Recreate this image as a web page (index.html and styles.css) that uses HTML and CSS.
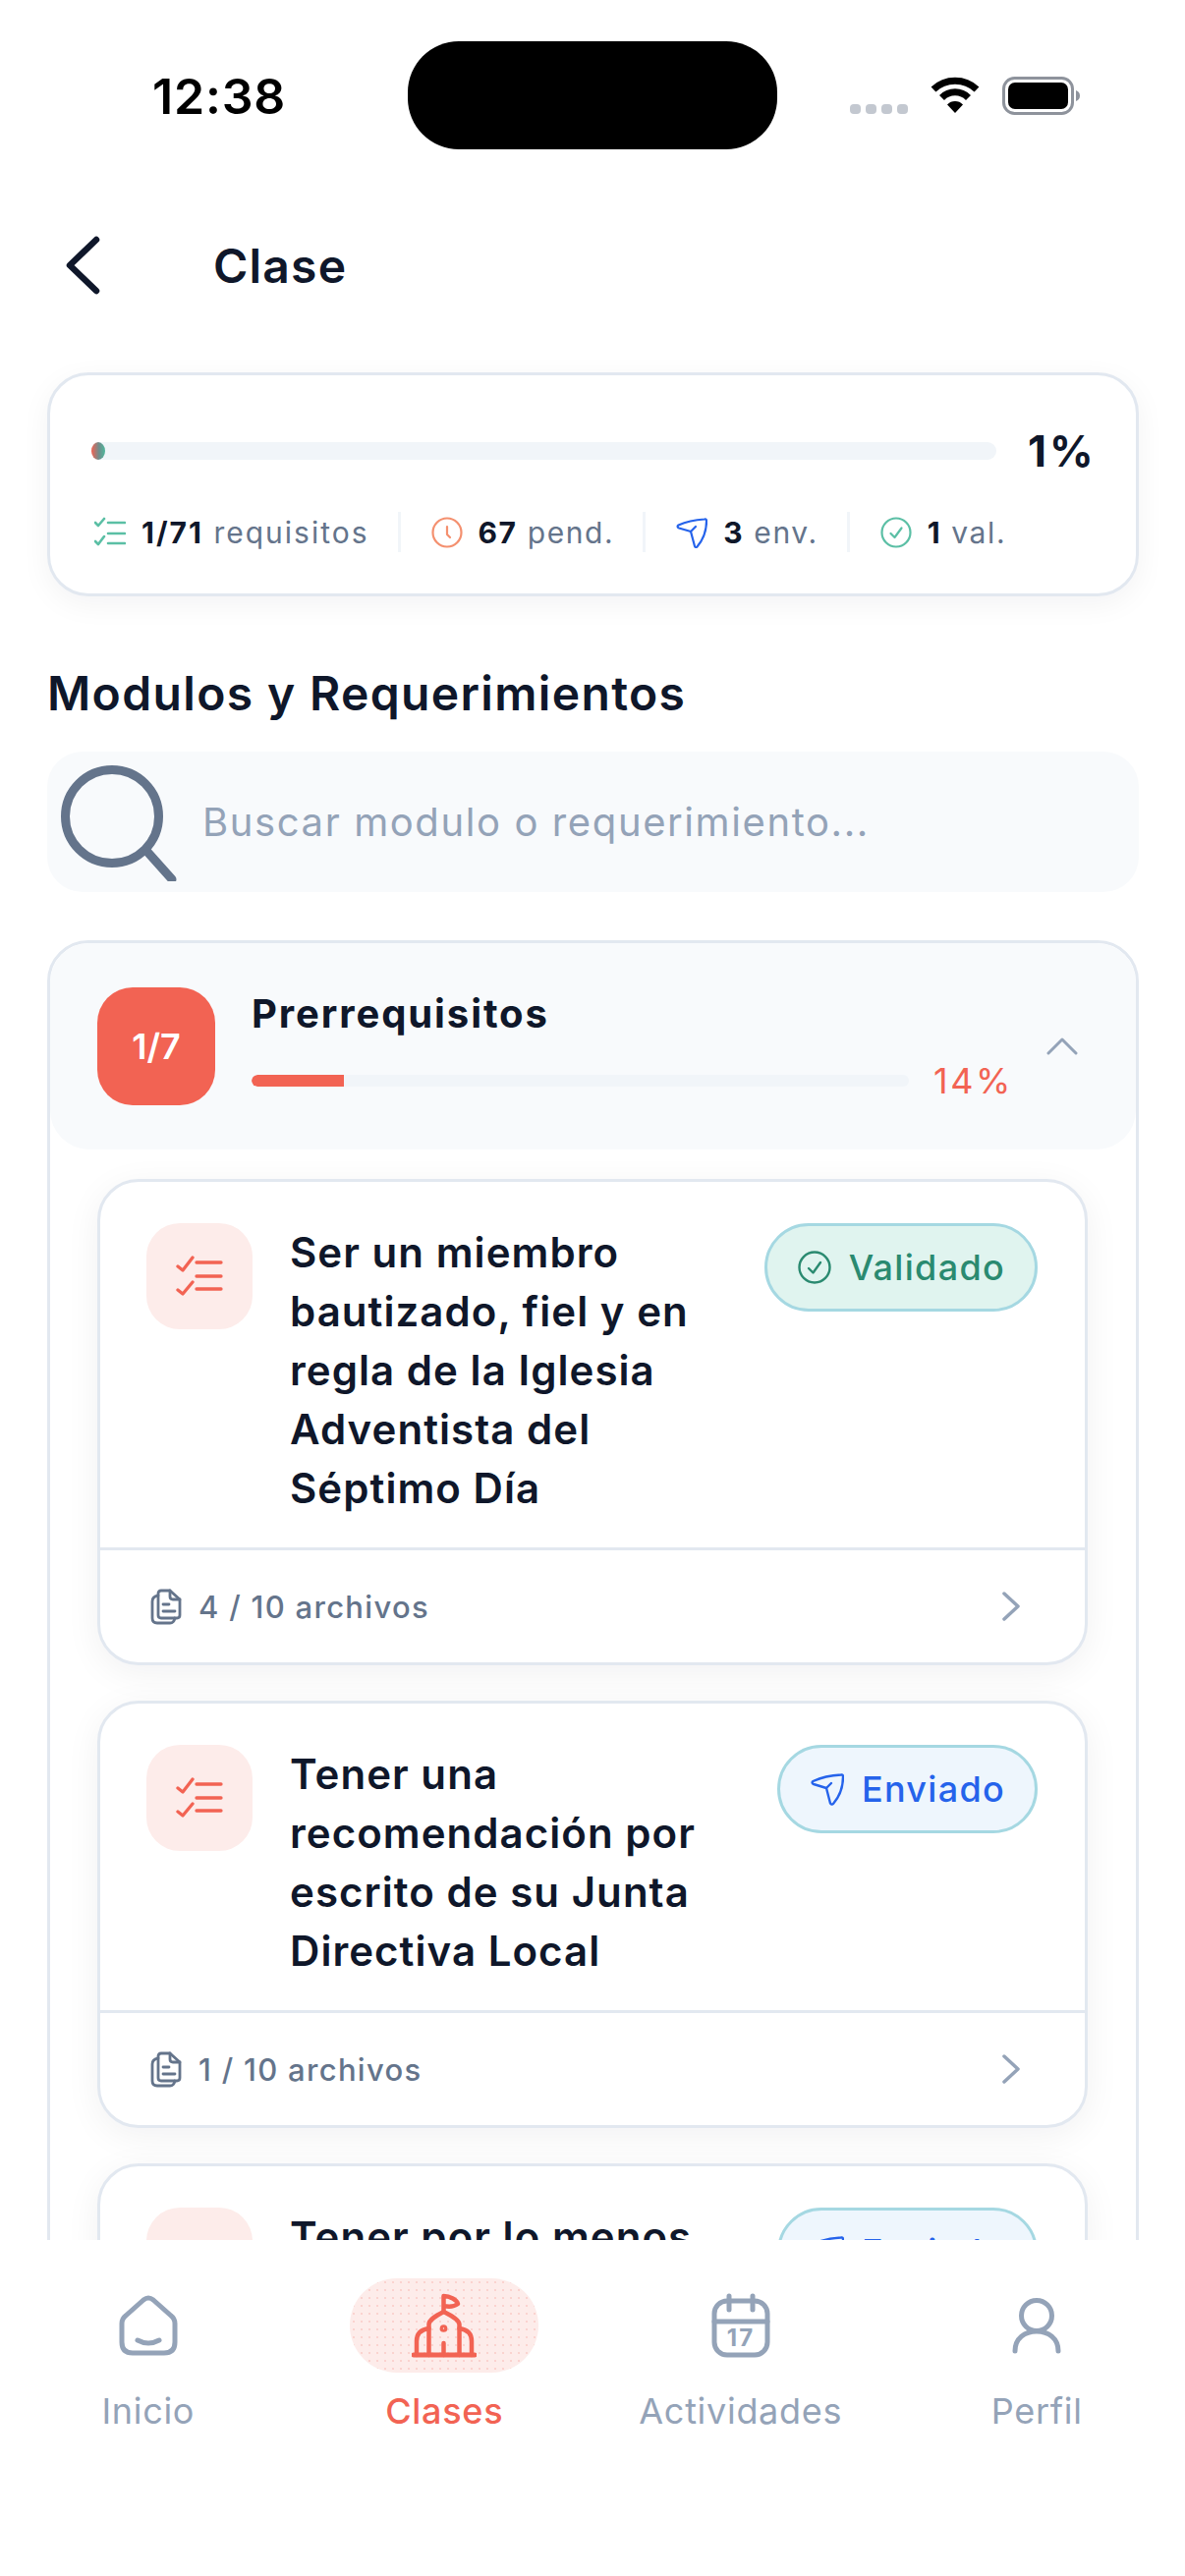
FILE: index.html
```html
<!DOCTYPE html>
<html lang="es">
<head>
    <meta charset="UTF-8">
    <meta name="viewport" content="width=device-width, initial-scale=1.0">
    <title>Clase</title>
    <link rel="stylesheet" href="styles.css">
</head>
<body>
<div class="screen">
    <div class="status-bar">
        <span class="status-time">12:38</span>
        <div class="island"></div>
        <div class="status-icons">
            <div class="signal"><i></i><i></i><i></i><i></i></div>
            <svg class="wifi" viewBox="0 0 50 37">
                <path d="M3 13A32 32 0 0 1 47 13" fill="none" stroke="#000" stroke-width="7"/>
                <path d="M11.500 21.500A19 19 0 0 1 38.500 21.500" fill="none" stroke="#000" stroke-width="7"/>
                <path d="M25 37L17 28.500A11 11 0 0 1 33 28.500Z" fill="#000"/>
            </svg>
            <svg class="battery" viewBox="0 0 80 39">
                <rect x="1.500" y="1.500" width="70" height="36" rx="11" fill="none" stroke="#8e939c" stroke-width="3"/>
                <rect x="6" y="6" width="61" height="27" rx="7" fill="#000"/>
                <path d="M75 14C78 15 79 17 79 19.500C79 22 78 24 75 25Z" fill="#8e939c"/>
            </svg>
        </div>
    </div>

    <header class="top-bar">
        <svg class="back-icon" viewBox="0 0 36 60" fill="none" stroke="#0f172a" stroke-width="6.500" stroke-linecap="round" stroke-linejoin="round">
            <path d="M32 4L5 30L32 56"/>
        </svg>
        <h1 class="page-title">Clase</h1>
    </header>

    <main class="content">
        <section class="summary-card">
            <div class="summary-progress">
                <div class="summary-track"><div class="summary-fill"></div></div>
                <span class="summary-percent">1%</span>
            </div>
            <div class="summary-stats">
                <div class="stat">
                    <svg class="stat-icon" viewBox="0 0 32 32" fill="none" stroke="#5bbfa5" stroke-width="2.600" stroke-linecap="round" stroke-linejoin="round">
                        <path d="M1 6L4 9L10 2M1 25L4 28L10 20M14 6H31M14 17H31M14 27H31"/>
                    </svg>
                    <span class="stat-text stat-text-wide"><b>1/71</b> requisitos</span>
                </div>
                <div class="stat-sep"></div>
                <div class="stat">
                    <svg class="stat-icon" viewBox="0 0 32 32" fill="none" stroke="#f4906f" stroke-width="2.200" stroke-linecap="round" stroke-linejoin="round">
                        <circle cx="16" cy="16" r="14.500"/>
                        <path d="M16 10V18L19 21"/>
                    </svg>
                    <span class="stat-text"><b>67</b> pend.</span>
                </div>
                <div class="stat-sep"></div>
                <div class="stat">
                    <svg class="stat-icon" viewBox="0 0 32 32" fill="none" stroke="#2563eb" stroke-width="2.200" stroke-linecap="round" stroke-linejoin="round">
                        <path d="M29 2.500C30.500 2 31 3 31 4.500C31 14 27 24 21.500 30.500C20.500 31.500 19.500 31 19 30L15 15L3 11.500C1.500 11 1 9.500 2.500 8.500C10 5 20 3 29 2.500Z"/>
                        <path d="M15 15L20 10"/>
                    </svg>
                    <span class="stat-text"><b>3</b> env.</span>
                </div>
                <div class="stat-sep"></div>
                <div class="stat">
                    <svg class="stat-icon" viewBox="0 0 32 32" fill="none" stroke="#5bbfa5" stroke-width="2.200" stroke-linecap="round" stroke-linejoin="round">
                        <circle cx="16" cy="16" r="14.500"/>
                        <path d="M10.500 17L14.500 21L21.500 11.500"/>
                    </svg>
                    <span class="stat-text"><b>1</b> val.</span>
                </div>
            </div>
        </section>

        <h2 class="section-title">Modulos y Requerimientos</h2>

        <div class="search-box">
            <svg class="search-icon" viewBox="0 0 120 120" fill="none" stroke="#64748b" stroke-width="9" stroke-linecap="round">
                <circle cx="54" cy="54" r="47.500"/>
                <path d="M90 90L115 118"/>
            </svg>
            <input class="search-input" type="text" placeholder="Buscar modulo o requerimiento...">
        </div>

        <section class="module">
            <div class="module-head">
                <div class="module-badge">1/7</div>
                <div class="module-info">
                    <div class="module-name">Prerrequisitos</div>
                    <div class="module-progress">
                        <div class="module-track"><div class="module-fill" style="width: 14%"></div></div>
                        <span class="module-percent">14%</span>
                    </div>
                </div>
                <svg class="module-toggle" viewBox="0 0 32 18" fill="none" stroke="#94a3b8" stroke-width="3" stroke-linecap="round" stroke-linejoin="round">
                    <path d="M2 16L16 2L30 16"/>
                </svg>
            </div>

            <div class="req-list">
                <article class="req-card">
                    <div class="req-body">
                        <div class="req-icon">
                            <svg viewBox="0 0 48 48" fill="none" stroke="#f26353" stroke-width="3.300" stroke-linecap="round" stroke-linejoin="round">
                                <path d="M2 14L7 18L17 5M2 38L7 42L17 30M21 10H46M21 24H46M21 37H46"/>
                            </svg>
                        </div>
                        <h3 class="req-title">Ser un miembro bautizado, fiel y en regla de la Iglesia Adventista del Séptimo Día</h3>
                        <span class="pill pill-valid">
                            <svg viewBox="0 0 34 34" fill="none" stroke="#2a8a70" stroke-width="2.400" stroke-linecap="round" stroke-linejoin="round">
                                <circle cx="17" cy="17" r="15.500"/>
                                <path d="M11 18L15.500 22.500L23 12"/>
                            </svg>
                            Validado
                        </span>
                    </div>
                    <div class="req-foot">
                        <svg class="doc-icon" viewBox="0 0 32 37" fill="none" stroke="#64748b" stroke-width="2.800" stroke-linecap="round" stroke-linejoin="round">
                            <path d="M8 5Q8 2 11 2H20L30 11V27Q30 30 27 30H11Q8 30 8 27Z"/>
                            <path d="M20 2V8Q20 11 23 11H30M13 16H19M13 23H25"/>
                            <path d="M8 7Q2 8 2 13V30Q2 35 7 35H20Q24 35 25 30"/>
                        </svg>
                        <span class="req-files">4 / 10 archivos</span>
                        <svg class="req-arrow" viewBox="0 0 18 30" fill="none" stroke="#94a3b8" stroke-width="3.500" stroke-linecap="round" stroke-linejoin="round">
                            <path d="M2 2L16 15L2 28"/>
                        </svg>
                    </div>
                </article>

                <article class="req-card">
                    <div class="req-body">
                        <div class="req-icon">
                            <svg viewBox="0 0 48 48" fill="none" stroke="#f26353" stroke-width="3.300" stroke-linecap="round" stroke-linejoin="round">
                                <path d="M2 14L7 18L17 5M2 38L7 42L17 30M21 10H46M21 24H46M21 37H46"/>
                            </svg>
                        </div>
                        <h3 class="req-title">Tener una recomendación por escrito de su Junta Directiva Local</h3>
                        <span class="pill pill-sent">
                            <svg viewBox="0 0 34 34" fill="none" stroke="#2563eb" stroke-width="2.400" stroke-linecap="round" stroke-linejoin="round">
                                <path d="M31 2.500C32.500 2 33 3 33 4.500C33 15 29 25 23 32C22 33 20.500 32.500 20 31.500L16 16L3 12C1.500 11.500 1 10 2.500 9C10 5.500 21 3 31 2.500Z"/>
                                <path d="M16 16L21 11"/>
                            </svg>
                            Enviado
                        </span>
                    </div>
                    <div class="req-foot">
                        <svg class="doc-icon" viewBox="0 0 32 37" fill="none" stroke="#64748b" stroke-width="2.800" stroke-linecap="round" stroke-linejoin="round">
                            <path d="M8 5Q8 2 11 2H20L30 11V27Q30 30 27 30H11Q8 30 8 27Z"/>
                            <path d="M20 2V8Q20 11 23 11H30M13 16H19M13 23H25"/>
                            <path d="M8 7Q2 8 2 13V30Q2 35 7 35H20Q24 35 25 30"/>
                        </svg>
                        <span class="req-files">1 / 10 archivos</span>
                        <svg class="req-arrow" viewBox="0 0 18 30" fill="none" stroke="#94a3b8" stroke-width="3.500" stroke-linecap="round" stroke-linejoin="round">
                            <path d="M2 2L16 15L2 28"/>
                        </svg>
                    </div>
                </article>

                <article class="req-card">
                    <div class="req-body">
                        <div class="req-icon"></div>
                        <h3 class="req-title">Tener por lo menos</h3>
                        <span class="pill pill-sent">
                            <svg viewBox="0 0 34 34" fill="none" stroke="#2563eb" stroke-width="2.400" stroke-linecap="round" stroke-linejoin="round">
                                <path d="M31 2.500C32.500 2 33 3 33 4.500C33 15 29 25 23 32C22 33 20.500 32.500 20 31.500L16 16L3 12C1.500 11.500 1 10 2.500 9C10 5.500 21 3 31 2.500Z"/>
                                <path d="M16 16L21 11"/>
                            </svg>
                            Enviado
                        </span>
                    </div>
                </article>
            </div>
        </section>
    </main>

    <nav class="tab-bar">
        <div class="tab">
            <div class="tab-icon">
                <svg width="60" height="62" viewBox="0 0 60 62" fill="none" stroke="#94a3b8" stroke-width="5" stroke-linecap="round" stroke-linejoin="round">
                    <path d="M25 5Q30 1 35 5L53 21Q57 24 57 29V48Q57 59 46 59H14Q3 59 3 48V29Q3 24 7 21Z"/>
                    <path d="M19 46Q30 52 41 46"/>
                </svg>
            </div>
            <span class="tab-label">Inicio</span>
        </div>
        <div class="tab tab-active">
            <div class="tab-icon">
                <svg width="66" height="66" viewBox="0 0 66 66" fill="none" stroke="#f26353" stroke-width="4.500" stroke-linecap="round" stroke-linejoin="round">
                    <path d="M32.500 19V3C39 3 46 7 47 11C43 14 37 14 32.500 13"/>
                    <path d="M17.500 63V32C17.500 27 25 23 32.500 19C40 23 48.500 27 48.500 32V63"/>
                    <path d="M5 63V49C5 41 10 37 17.500 36M48.500 36C56 37 61 41 61 49V63"/>
                    <path d="M32.500 63V51"/>
                    <path d="M2 63H64" stroke-width="5"/>
                    <circle cx="32.500" cy="36" r="1.600"/>
                </svg>
            </div>
            <span class="tab-label">Clases</span>
        </div>
        <div class="tab">
            <div class="tab-icon">
                <svg width="60" height="66" viewBox="0 0 60 66" fill="none" stroke="#94a3b8" stroke-width="5" stroke-linecap="round" stroke-linejoin="round">
                    <rect x="3" y="8" width="54" height="55" rx="13"/>
                    <path d="M3 29H57M18 3V17M42 3V17"/>
                    <text class="cal-day" x="30" y="54" text-anchor="middle">17</text>
                </svg>
            </div>
            <span class="tab-label">Actividades</span>
        </div>
        <div class="tab">
            <div class="tab-icon">
                <svg width="52" height="60" viewBox="0 0 52 60" fill="none" stroke="#94a3b8" stroke-width="5" stroke-linecap="round" stroke-linejoin="round">
                    <circle cx="26" cy="20" r="15.500"/>
                    <path d="M4 56C4 43 14 36 26 36C38 36 48 43 48 56"/>
                </svg>
            </div>
            <span class="tab-label">Perfil</span>
        </div>
    </nav>
</div>
</body>
</html>
```
FILE: styles.css
```css
:root {
    --ink: #0f172a;
    --muted: #64748b;
    --faint: #94a3b8;
    --line: #e2e8f0;
    --soft: #f8fafc;
    --track: #f1f5f9;
    --coral: #f26353;
    --coral-soft: #fdecea;
}

* {
    box-sizing: border-box;
}

html, body {
    margin: 0;
    background-color: white;
}

body {
    font-family: Inter, 'Noto Sans', sans-serif;
    color: var(--ink);
}

.screen {
    width: 1206px;
    height: 2622px;
    display: flex;
    flex-direction: column;
    overflow: hidden;
    background-color: white;
}

/* status bar */
.status-bar {
    flex: none;
    height: 190px;
    display: flex;
    align-items: flex-start;
    padding: 42px 0 0 155px;
}

.status-time {
    width: 260px;
    margin-top: 23px;
    font-size: 50px;
    line-height: 66px;
    font-weight: 600;
    letter-spacing: 0.8px;
    color: black;
}

.island {
    width: 376px;
    height: 110px;
    border-radius: 52px;
    background-color: black;
}

.status-icons {
    display: flex;
    align-items: flex-start;
    margin: 36px 0 0 74px;
}

.signal {
    display: flex;
    gap: 5px;
    margin-top: 28px;
}

.signal i {
    width: 11px;
    height: 10px;
    border-radius: 4px;
    background-color: #c3c8d0;
}

.wifi {
    width: 50px;
    height: 37px;
    margin-left: 23px;
}

.battery {
    width: 80px;
    height: 39px;
    margin-left: 23px;
}

/* top bar */
.top-bar {
    flex: none;
    height: 160px;
    display: flex;
    align-items: center;
    padding-left: 66px;
}

.back-icon {
    width: 36px;
    height: 60px;
}

.page-title {
    margin: 0 0 0 115px;
    font-size: 48px;
    font-weight: 600;
    letter-spacing: 1.2px;
}

/* content */
.content {
    flex: 1;
    min-height: 0;
    overflow: hidden;
    padding: 29px 47px 0 48px;
}

.summary-card {
    height: 228px;
    padding: 68px 41px 0 42px;
    border: 3px solid var(--line);
    border-radius: 42px;
    box-shadow: 0 8px 30px rgba(15, 23, 42, 0.05);
    background-color: white;
}

.summary-progress {
    display: flex;
    align-items: center;
    gap: 32px;
    height: 18px;
}

.summary-track {
    flex: 1;
    height: 18px;
    border-radius: 9px;
    background-color: var(--track);
}

.summary-fill {
    width: 14px;
    height: 18px;
    border-radius: 50%;
    background: linear-gradient(90deg, var(--coral), #6f8d8c 55%, #4fb89c);
}

.summary-percent {
    width: 69px;
    font-size: 44px;
    font-weight: 700;
    letter-spacing: 3px;
    white-space: nowrap;
}

.summary-stats {
    display: flex;
    align-items: center;
    gap: 31px;
    margin: 53px 0 0 3px;
}

.stat {
    display: flex;
    align-items: center;
    gap: 16px;
}

.stat-icon {
    width: 32px;
    height: 32px;
}

.stat-text {
    font-size: 30px;
    line-height: 40px;
    letter-spacing: 1.6px;
    color: var(--muted);
    white-space: nowrap;
}

.stat-text-wide {
    letter-spacing: 2px;
}

.stat-text b {
    font-weight: 700;
    color: var(--ink);
}

.stat-sep {
    width: 3px;
    height: 41px;
    margin-left: -2px;
    background-color: var(--track);
}

.section-title {
    margin: 69px 0 0;
    font-size: 48px;
    line-height: 60px;
    font-weight: 600;
    letter-spacing: 1.35px;
}

.search-box {
    display: flex;
    align-items: center;
    height: 143px;
    margin-top: 29px;
    padding-left: 12px;
    border-radius: 36px;
    background-color: var(--soft);
}

.search-icon {
    flex: none;
    width: 120px;
    height: 120px;
}

.search-input {
    flex: 1;
    margin-left: 24px;
    border: none;
    outline: none;
    background: transparent;
    font-family: inherit;
    font-size: 40px;
    letter-spacing: 1.6px;
    color: var(--ink);
}

.search-input::placeholder {
    color: var(--faint);
    opacity: 1;
}

/* module */
.module {
    margin-top: 49px;
    border: 3px solid var(--line);
    border-radius: 42px;
    padding-bottom: 40px;
}

.module-head {
    display: flex;
    height: 210px;
    padding: 45px 0 0 48px;
    border-radius: 40px;
    background-color: var(--soft);
}

.module-badge {
    flex: none;
    width: 120px;
    height: 120px;
    display: flex;
    align-items: center;
    justify-content: center;
    border-radius: 36px;
    background-color: var(--coral);
    color: white;
    font-size: 36px;
    font-weight: 600;
}

.module-info {
    width: 771px;
    margin-left: 37px;
}

.module-name {
    margin-top: -3px;
    font-size: 40px;
    line-height: 60px;
    font-weight: 700;
    letter-spacing: 1.9px;
}

.module-progress {
    display: flex;
    align-items: center;
    margin-top: 16px;
    height: 44px;
}

.module-track {
    flex: none;
    width: 669px;
    height: 12px;
    border-radius: 6px;
    overflow: hidden;
    background-color: var(--track);
}

.module-fill {
    height: 100%;
    border-radius: 6px 0 0 6px;
    background-color: var(--coral);
}

.module-percent {
    margin-left: 25px;
    font-size: 36px;
    letter-spacing: 2.5px;
    white-space: nowrap;
    color: var(--coral);
}

.module-toggle {
    flex: none;
    width: 32px;
    height: 18px;
    margin: 51px 0 0 38px;
}

.req-list {
    display: flex;
    flex-direction: column;
    gap: 36px;
    margin-top: 30px;
    padding: 0 49px 0 48px;
}

.req-card {
    border: 3px solid var(--line);
    border-radius: 42px;
    background-color: white;
    box-shadow: 0 8px 36px rgba(15, 23, 42, 0.06);
}

.req-body {
    display: flex;
    align-items: flex-start;
    padding: 42px 48px 30px 47px;
}

.req-icon {
    flex: none;
    width: 108px;
    height: 108px;
    display: flex;
    align-items: center;
    justify-content: center;
    border-radius: 34px;
    background-color: var(--coral-soft);
}

.req-icon svg {
    width: 48px;
    height: 48px;
}

.req-title {
    flex: 1;
    min-width: 0;
    margin: 0 20px 0 38px;
    font-size: 42px;
    line-height: 60px;
    font-weight: 600;
    letter-spacing: 1.05px;
}

.pill {
    flex: none;
    display: flex;
    align-items: center;
    gap: 18px;
    height: 90px;
    padding: 0 30px 0 31px;
    border: 3px solid #a5d8e2;
    border-radius: 45px;
    font-size: 36px;
    font-weight: 500;
    letter-spacing: 1.3px;
}

.pill svg {
    width: 34px;
    height: 34px;
}

.pill-valid {
    background-color: #e0f4ef;
    color: #2a8a70;
}

.pill-sent {
    background-color: #eef6fd;
    color: #2563eb;
}

.req-foot {
    display: flex;
    align-items: center;
    height: 117px;
    padding: 0 66px 0 51px;
    border-top: 3px solid var(--line);
}

.doc-icon {
    width: 32px;
    height: 37px;
}

.req-files {
    flex: 1;
    margin-left: 17px;
    font-size: 31px;
    font-weight: 500;
    letter-spacing: 1.3px;
    color: var(--muted);
}

.req-arrow {
    width: 18px;
    height: 30px;
}

/* tab bar */
.tab-bar {
    flex: none;
    height: 342px;
    display: grid;
    grid-template-columns: repeat(4, 1fr);
    padding-top: 39px;
    background-color: white;
}

.tab {
    display: flex;
    flex-direction: column;
    align-items: center;
}

.tab-icon {
    width: 192px;
    height: 96px;
    display: flex;
    align-items: center;
    justify-content: center;
    border-radius: 48px;
}

.tab-active .tab-icon {
    background-color: var(--coral-soft);
    background-image: radial-gradient(rgba(242, 99, 83, 0.18) 1px, transparent 1.2px);
    background-size: 8px 8px;
}

.tab-label {
    margin-top: 12px;
    font-size: 36px;
    line-height: 54px;
    letter-spacing: 0.7px;
    color: var(--faint);
}

.tab-active .tab-label {
    font-weight: 500;
    color: var(--coral);
}

.cal-day {
    font-family: Inter, sans-serif;
    font-size: 24px;
    font-weight: 700;
    letter-spacing: 2px;
    fill: #94a3b8;
    stroke: none;
}
```
